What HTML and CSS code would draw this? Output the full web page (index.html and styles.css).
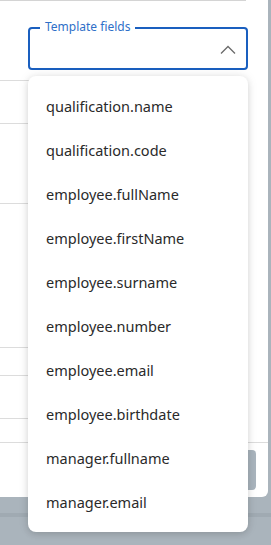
FILE: index.html
```html
<!DOCTYPE html>
<html>
<head>
<meta charset="utf-8">
<link rel="stylesheet" href="styles.css">
</head>
<body>
<div class="dialog">
  <div class="topline"></div>
  <div class="row row-field">
    <div class="select">
      <span class="label">Template fields</span>
      <svg class="chev" width="16" height="10" viewBox="0 0 16 10"><path d="M1 8.5 L8 1.5 L15 8.5" fill="none" stroke="#6b6b6b" stroke-width="1.3"/></svg>
    </div>
  </div>
  <div class="row h43"></div>
  <div class="row h80"></div>
  <div class="row h144"></div>
  <div class="row h28"></div>
  <div class="row h43"></div>
  <div class="row h24 full"></div>
  <div class="footer"><div class="btn"></div></div>
</div>
<div class="backdrop"><div class="band"></div></div>
<ul class="menu">
  <li>qualification.name</li>
  <li>qualification.code</li>
  <li>employee.fullName</li>
  <li>employee.firstName</li>
  <li>employee.surname</li>
  <li>employee.number</li>
  <li>employee.email</li>
  <li>employee.birthdate</li>
  <li>manager.fullname</li>
  <li>manager.email</li>
</ul>
</body>
</html>
```
FILE: styles.css
```css
html, body { margin: 0; padding: 0; }
body {
  width: 271px;
  height: 545px;
  overflow: hidden;
  background: #aab4bc;
  font-family: "Noto Sans", "Open Sans", sans-serif;
  position: relative;
}
.dialog {
  width: 268px;
  height: 497px;
  background: #fff;
  border-bottom-right-radius: 6px;
  display: flex;
  flex-direction: column;
}
.topline { height: 1px; width: 246px; background: #d4d4d4; flex: none; }
.row { width: 246px; border-bottom: 1px solid #dcdcdc; flex: none; box-sizing: border-box; }
.row-field { height: 80px; padding: 26px 0 0 28px; }
.h43 { height: 43px; }
.h80 { height: 80px; }
.h144 { height: 144px; }
.h28 { height: 28px; }
.h24 { height: 24px; }
.full { width: 268px; }
.select {
  position: relative;
  width: 220px;
  height: 43px;
  box-sizing: border-box;
  border: 2px solid #1a5fbf;
  border-radius: 4px;
}
.label {
  position: absolute;
  left: 10px;
  top: -10px;
  padding: 0 5px 0 5px;
  background: #fff;
  color: #2f6fc8;
  font-size: 12px;
  line-height: 16px;
}
.chev { position: absolute; right: 10px; top: 16px; }
.footer { flex: 1; display: flex; justify-content: flex-end; padding: 7px 12px 0 0; }
.btn { width: 8px; height: 40px; background: #a9b4bd; border-radius: 0 4px 4px 0; }
.backdrop { height: 48px; display: flex; flex-direction: column; padding-top: 16px; box-sizing: border-box; }
.band { height: 4px; background: #a0aab2; }
.menu {
  position: absolute;
  left: 28px;
  top: 76px;
  width: 220px;
  margin: 0;
  padding: 8px 0;
  list-style: none;
  background: #fff;
  border-radius: 8px;
  box-shadow: 0 2px 6px rgba(0,0,0,0.12), 0 0 12px rgba(0,0,0,0.08);
}
.menu li {
  height: 44px;
  line-height: 44px;
  padding-left: 18px;
  font-size: 14.5px;
  color: #2a2a2a;
}
```
